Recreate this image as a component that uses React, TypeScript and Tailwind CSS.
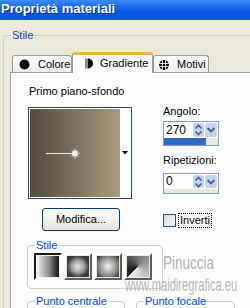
import React from 'react';

function SpinArrows() {
    return (
        <div className="flex h-full gap-[1px] py-[1px] pr-[1px]">
            <div className="flex w-[11px] items-center justify-center rounded-[2px] bg-[#c3d4fb]">
                <svg width="9" height="12" viewBox="0 0 9 12">
                    <path d="M1.5 4.5 L4.5 1.5 L7.5 4.5" fill="none" stroke="#4d6185" strokeWidth="1.6" />
                    <path d="M1.5 7.5 L4.5 10.5 L7.5 7.5" fill="none" stroke="#4d6185" strokeWidth="1.6" />
                </svg>
            </div>
            <div className="flex w-[12px] items-center justify-center rounded-[2px] bg-[#c3d4fb]">
                <svg width="10" height="8" viewBox="0 0 10 8">
                    <path d="M1.5 2 L5 5.5 L8.5 2" fill="none" stroke="#4d6185" strokeWidth="1.8" />
                </svg>
            </div>
        </div>
    );
}

const styleSwatches = [
    'bg-[linear-gradient(90deg,#f4f4f4,#8a8a8a_55%,#111)]',
    'bg-[radial-gradient(closest-side,#e9e9e9,#9a9a9a_60%,#3a3a3a)]',
    'bg-[radial-gradient(circle,#f2f2f2,#8c8c8c_60%,#2c2c2c)]',
    'bg-[conic-gradient(from_225deg,#111,#777_40%,#f4f4f4)]',
];

export default function App() {
    return (
        <div className="h-[308px] w-[250px] overflow-hidden bg-[#ece9d8] font-['Liberation_Sans',Arial,sans-serif] text-[11px] text-black">
            {/* Title bar */}
            <div className="h-[20px] bg-linear-to-b from-[#3d8af7] via-[#0b5ce9] to-[#0a54dc] pl-[1px] text-[13px] font-bold leading-[17px] text-white text-shadow-[1px_1px_0_#0a2a7c]">
                Proprietà materiali
            </div>

            {/* Outer "Stile" group */}
            <div className="relative ml-[3px] mt-[15px] h-[300px] w-[260px] rounded-tl-[3px] border-l border-t border-[#d0d0bf] pl-[6px] pt-[16px]">
                <span className="absolute -top-[8px] left-[7px] bg-[#ece9d8] px-[1px] leading-[14px] text-[#0046d5]">Stile</span>

                {/* Tabs */}
                <div className="flex h-[21px] items-end pl-[2px]">
                    <div className="flex h-[18px] w-[60px] items-center gap-[8px] rounded-t-[3px] border-l border-r border-t border-[#919b9c] bg-linear-to-b from-[#fefefe] to-[#ecebe5] pl-[6px]">
                        <svg width="11" height="11" viewBox="0 0 11 11">
                            <circle cx="5.5" cy="5.5" r="5" fill="#000" />
                        </svg>
                        <span className="leading-[13px]">Colore</span>
                    </div>
                    <div className="relative z-10 flex h-[21px] w-[81px] items-center gap-[7px] rounded-t-[3px] border-l border-r border-t-[3px] border-[#919b9c] border-t-[#f4b23e] bg-[#fcfcfe] pb-[1px] pl-[12px]">
                        <svg width="8" height="11" viewBox="0 0 8 11">
                            <rect x="0" y="0.5" width="3" height="10" fill="#8a8a8a" />
                            <path d="M3 0.5 A5 5 0 0 1 3 10.5 Z" fill="#000" />
                        </svg>
                        <span className="leading-[13px]">Gradiente</span>
                    </div>
                    <div className="flex h-[18px] w-[56px] items-center gap-[8px] rounded-t-[3px] border-l border-r border-t border-[#919b9c] bg-linear-to-b from-[#fefefe] to-[#ecebe5] pl-[5px]">
                        <svg width="10" height="10" viewBox="0 0 10 10">
                            <circle cx="5" cy="5" r="5" fill="#000" />
                            <path d="M3.4 0 V10 M6.6 0 V10 M0 3.4 H10 M0 6.6 H10" stroke="#fff" strokeWidth="0.9" />
                        </svg>
                        <span className="leading-[13px]">Motivi</span>
                    </div>
                </div>

                {/* Tab panel */}
                <div className="relative -mt-px h-[260px] w-[245px] border border-[#919b9c] bg-[#fcfcfe] pt-[12px]">
                    <div className="flex">
                        {/* Left column */}
                        <div className="ml-[17px] w-[104px]">
                            <div className="pl-[1px] leading-[13px]">Primo piano-sfondo</div>
                            <div className="mt-[9px] flex h-[92px] w-[104px] border border-[#1f4478] bg-white p-[1px]">
                                <div className="h-full w-[90px] bg-linear-to-r from-[#544a3e] to-[#aa9a7e]">
                                    <svg width="90" height="88" viewBox="0 0 90 88">
                                        <line x1="16" y1="44.5" x2="44" y2="44.5" stroke="#f2e9d6" strokeWidth="1" />
                                        <circle cx="45" cy="44.5" r="3" fill="#fbf3e2" />
                                        <path d="M45 39.5 V49.5 M40 44.5 H50 M41.5 41 L48.5 48 M48.5 41 L41.5 48" stroke="#f6eedc" strokeWidth="0.8" />
                                        <rect x="47.5" y="43.5" width="2" height="2" fill="#2fe0d8" />
                                    </svg>
                                </div>
                                <div className="flex flex-1 items-center justify-center">
                                    <svg width="6" height="4" viewBox="0 0 6 4">
                                        <path d="M0 0 H6 L3 3.5 Z" fill="#000" />
                                    </svg>
                                </div>
                            </div>
                            <button className="ml-[14px] mt-[9px] h-[23px] w-[78px] rounded-[3px] border border-[#003c74] bg-linear-to-b from-[#ffffff] to-[#e3e2da] text-center leading-[13px]">
                                Modifica...
                            </button>
                        </div>

                        {/* Right column */}
                        <div className="ml-[31px] w-[56px] pt-[20px]">
                            <div className="leading-[13px]">Angolo:</div>
                            <div className="mt-[3px] flex h-[25px] w-[56px] flex-col border border-[#7f9db9] bg-white">
                                <div className="flex h-[16px] items-center justify-between">
                                    <span className="pl-[2px] text-[12px] leading-[13px]">270</span>
                                    <SpinArrows />
                                </div>
                                <div className="flex h-[7px] bg-[#ece9d8]">
                                    <div className="h-full w-[42px] bg-[#316ac5]" />
                                </div>
                            </div>

                            <div className="mt-[8px] leading-[13px]">Ripetizioni:</div>
                            <div className="mt-[6px] flex h-[21px] w-[56px] flex-col border border-[#7f9db9] bg-white">
                                <div className="flex h-[15px] items-center justify-between">
                                    <span className="pl-[2px] text-[12px] leading-[13px]">0</span>
                                    <SpinArrows />
                                </div>
                                <div className="h-[4px] bg-[#ece9d8]" />
                            </div>

                            <div className="mt-[19px] flex items-center">
                                <div className="h-[13px] w-[13px] border border-[#1c5180] bg-linear-to-br from-[#dcdcd5] to-[#f8f8f4]" />
                                <span className="ml-[2px] border border-dotted border-black px-[1px] leading-[13px]">Inverti</span>
                            </div>
                        </div>
                    </div>

                    {/* Stile buttons */}
                    <div className="relative ml-[16px] mt-[14px] h-[44px] w-[136px] rounded-[4px] border border-[#d0d0bf] pl-[6px] pt-[7px]">
                        <span className="absolute -top-[8px] left-[7px] bg-[#fcfcfe] px-[1px] leading-[14px] text-[#0046d5]">Stile</span>
                        <div className="flex gap-[2px]">
                            {styleSwatches.map((s, i) => (
                                <div
                                    key={i}
                                    className={
                                        i === 0
                                            ? 'flex h-[27px] w-[28px] items-center justify-center border-2 border-b-[#fdfdf9] border-l-[#1a1a1a] border-r-[#fdfdf9] border-t-[#1a1a1a] bg-[#f4f3ee]'
                                            : 'flex h-[27px] w-[28px] items-center justify-center border-2 border-b-[#5f5d52] border-l-[#ffffff] border-r-[#5f5d52] border-t-[#ffffff] bg-[#ece9d8]'
                                    }
                                >
                                    <div className={`h-[21px] w-[22px] ${s}`} />
                                </div>
                            ))}
                        </div>
                    </div>

                    {/* Punto groups */}
                    <div className="ml-[16px] mt-[12px] flex gap-[11px]">
                        <div className="relative h-[30px] w-[98px] rounded-[4px] border border-[#d0d0bf]">
                            <span className="absolute -top-[8px] left-[7px] bg-[#fcfcfe] px-[1px] leading-[14px] text-[#0046d5]">Punto centrale</span>
                        </div>
                        <div className="relative h-[30px] w-[99px] rounded-[4px] border border-[#d0d0bf]">
                            <span className="absolute -top-[8px] left-[7px] bg-[#fcfcfe] px-[1px] leading-[14px] text-[#0046d5]">Punto focale</span>
                        </div>
                    </div>

                    {/* Watermark */}
                    <div className="pointer-events-none absolute left-[152px] top-[180px] origin-left scale-x-[0.75] text-[18px] leading-[20px] text-[#9c9c9c]/80">Pinuccia</div>
                    <div className="pointer-events-none absolute left-[114px] top-[203px] origin-left scale-x-[0.62] text-[18px] leading-[19px] text-[#a4a4a4]/80">www.maidiregrafica.eu</div>
                </div>
            </div>
        </div>
    );
}
